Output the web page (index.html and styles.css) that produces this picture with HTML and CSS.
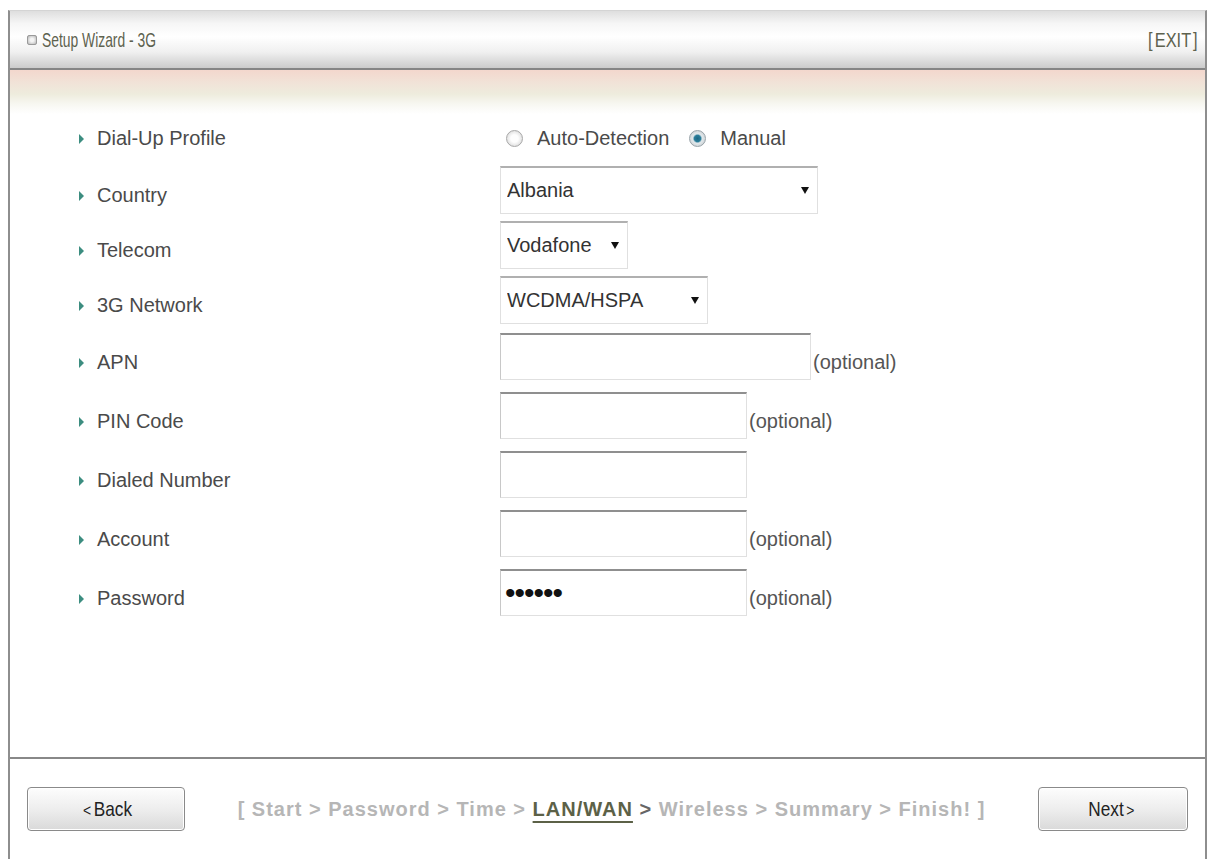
FILE: index.html
```html
<!DOCTYPE html>
<html lang="en">

<head>
    <meta charset="UTF-8">
    <meta name="viewport" content="width=device-width, initial-scale=1.0">
    <title>Setup Wizard - 3G</title>
    <link rel="stylesheet" href="styles.css">
</head>

<body>
    <div class="wizard">
        <div class="wizard-head">
            <h1 class="wizard-title"><span class="title-icon"></span><span class="narrow">Setup Wizard - 3G</span></h1>
            <a class="exit" href="#"><span class="narrow">[ EXIT ]</span></a>
        </div>

        <form class="wizard-body" action="#">
            <div class="row row-radio">
                <span class="field-name">Dial-Up Profile</span>
                <div class="field">
                    <label class="radio"><input type="radio" name="profile"> Auto-Detection</label>
                    <label class="radio"><input type="radio" name="profile" checked> Manual</label>
                </div>
            </div>
            <div class="row">
                <span class="field-name">Country</span>
                <div class="field">
                    <span class="select-wrap w-country">
                        <select name="country">
                            <option>Albania</option>
                        </select>
                    </span>
                </div>
            </div>
            <div class="row">
                <span class="field-name">Telecom</span>
                <div class="field">
                    <span class="select-wrap w-telecom">
                        <select name="telecom">
                            <option>Vodafone</option>
                        </select>
                    </span>
                </div>
            </div>
            <div class="row">
                <span class="field-name">3G Network</span>
                <div class="field">
                    <span class="select-wrap w-network">
                        <select name="network">
                            <option>WCDMA/HSPA</option>
                        </select>
                    </span>
                </div>
            </div>
            <div class="row row-text">
                <span class="field-name">APN</span>
                <div class="field">
                    <input class="text w-apn" type="text" name="apn">
                    <span class="hint">(optional)</span>
                </div>
            </div>
            <div class="row row-text">
                <span class="field-name">PIN Code</span>
                <div class="field">
                    <input class="text" type="text" name="pin">
                    <span class="hint">(optional)</span>
                </div>
            </div>
            <div class="row row-text">
                <span class="field-name">Dialed Number</span>
                <div class="field">
                    <input class="text" type="text" name="dial">
                </div>
            </div>
            <div class="row row-text">
                <span class="field-name">Account</span>
                <div class="field">
                    <input class="text" type="text" name="account">
                    <span class="hint">(optional)</span>
                </div>
            </div>
            <div class="row row-text">
                <span class="field-name">Password</span>
                <div class="field">
                    <input class="text pass" type="password" name="password" value="123456">
                    <span class="hint">(optional)</span>
                </div>
            </div>
        </form>

        <div class="wizard-foot">
            <button class="btn btn-back" type="button"><span class="narrow"><small>&lt;</small>Back</span></button>
            <p class="steps">[ Start &gt; Password &gt; Time &gt; <span class="current">LAN/WAN</span> <span class="next">&gt;</span> Wireless &gt; Summary &gt; Finish! ]</p>
            <button class="btn btn-next" type="button"><span class="narrow">Next<small>&gt;</small></span></button>
        </div>
    </div>
</body>

</html>
```

FILE: styles.css
```css
html,
body {
    margin: 0;
    height: 100%;
    overflow: hidden;
    background: #fff;
}

body {
    font-family: "Liberation Sans", Arial, sans-serif;
    color: #444;
}

/* squeezed lettering for the title bar and buttons */
.narrow {
    display: inline-block;
    transform: scaleX(.66);
    transform-origin: left center;
    white-space: nowrap;
}

.wizard {
    margin: 10px 8px 0 8px;
    height: calc(100vh - 10px);
    box-sizing: border-box;
    border-top: 1px solid #d4d4d4;
    border-left: 2px solid #8e8e8e;
    border-right: 2px solid #8e8e8e;
    display: flex;
    flex-direction: column;
}

/* title bar */
.wizard-head {
    height: 57px;
    flex: none;
    display: flex;
    align-items: center;
    justify-content: space-between;
    padding: 0 7px 0 17px;
    background: linear-gradient(#dedede 0, #f6f6f6 22%, #fff 45%, #f0f0f0 72%, #cbcbcb 100%);
    border-bottom: 2px solid #858585;
}

.wizard-title {
    margin: 0;
    display: flex;
    align-items: center;
    font-weight: normal;
    font-size: 21px;
    color: #5e624f;
}

.title-icon {
    width: 8px;
    height: 8px;
    margin-right: 5px;
    border: 1px solid #9a9a9a;
    border-radius: 2px;
    background: radial-gradient(#f4f4f4 30%, #b4b4b4 100%);
}

.exit {
    font-size: 21px;
    color: #5e624f;
    text-decoration: none;
}

.exit .narrow {
    transform: scaleX(.78);
    transform-origin: right center;
    word-spacing: -3px;
}

/* form rows */
.wizard-body {
    flex: 1;
    margin: 0;
    padding-top: 45px;
    background: linear-gradient(#f3d7cd 0, #f1e2d7 12px, #eeecdd 24px, #f7f7f1 34px, #fff 44px) no-repeat;
}

.row {
    display: grid;
    grid-template-columns: 490px 1fr;
    align-items: center;
    height: 55px;
}

.row-radio {
    height: 47px;
}

.row-text {
    height: 59px;
}

.field-name {
    padding-left: 69px;
    padding-top: 12px;
    font-size: 20px;
    color: #4a4a4a;
    display: flex;
    align-items: center;
}

.row-radio .field-name {
    padding-top: 0;
}

.field-name::before {
    content: "";
    width: 0;
    height: 0;
    margin-right: 13px;
    border-top: 5px solid transparent;
    border-bottom: 5px solid transparent;
    border-left: 5px solid #3c8d80;
}

.field {
    display: flex;
    align-items: center;
    font-size: 20px;
}

.radio {
    display: flex;
    align-items: center;
    margin-right: 14px;
    color: #4a4a4a;
}

.radio input {
    -webkit-appearance: none;
    appearance: none;
    box-sizing: border-box;
    width: 17px;
    height: 17px;
    margin: 0 14px 0 6px;
    border: 1px solid #a8a8a8;
    border-radius: 50%;
    background: radial-gradient(#fdfdfd 35%, #cdcdcd 100%);
}

.radio input:checked {
    background: radial-gradient(#1c6784 0, #2a7d99 30%, #e2e8eb 44%, #c2c7ca 100%);
    border-color: #97a2a8;
}

.select-wrap {
    position: relative;
    display: inline-block;
}

.select-wrap select {
    -webkit-appearance: none;
    appearance: none;
    width: 100%;
    height: 48px;
    padding: 0 6px;
    font-family: "Liberation Sans", Arial, sans-serif;
    font-size: 20px;
    color: #333;
    background: #fff;
    border: 1px solid #e0e0e0;
    border-top: 2px solid #b0b0b0;
    border-radius: 0;
}

/* drop-down arrow */
.select-wrap::after {
    content: "";
    position: absolute;
    right: 9px;
    top: 21px;
    border-left: 4px solid transparent;
    border-right: 4px solid transparent;
    border-top: 7px solid #111;
}

.w-country {
    width: 318px;
}

.w-telecom {
    width: 128px;
}

.w-network {
    width: 208px;
}

.text {
    width: 247px;
    height: 47px;
    box-sizing: border-box;
    margin: 0;
    padding: 0 4px;
    font-family: "Liberation Sans", Arial, sans-serif;
    font-size: 20px;
    color: #111;
    border: 1px solid #e0e0e0;
    border-top: 2px solid #8f8f8f;
    border-left-color: #c8c8c8;
}

.w-apn {
    width: 311px;
}

.pass {
    font-size: 30px;
    letter-spacing: -1px;
}

.hint {
    margin-left: 2px;
    padding-top: 12px;
    color: #555;
}

/* bottom bar */
.wizard-foot {
    height: 100px;
    flex: none;
    display: flex;
    align-items: center;
    justify-content: space-between;
    padding: 0 17px;
    border-top: 2px solid #888;
}

.btn {
    height: 44px;
    font-family: "Liberation Sans", Arial, sans-serif;
    font-size: 21px;
    color: #222;
    border: 1px solid #8a8a8a;
    border-radius: 4px;
    background: linear-gradient(#fdfdfd, #ececec 55%, #d9d9d9);
    box-shadow: inset 0 0 0 1px #fff;
}

.btn .narrow {
    transform: scaleX(.82);
    transform-origin: center;
}

.btn small {
    font-size: 17px;
    margin: 0 3px;
}

.btn-back {
    width: 158px;
}

.btn-next {
    width: 150px;
}

.steps {
    margin: 0;
    font-weight: bold;
    font-size: 20px;
    letter-spacing: 1px;
    color: #b6b6b6;
}

.steps .current {
    color: #5c6147;
    text-decoration: underline;
    text-decoration-thickness: 2px;
    text-underline-offset: 5px;
}

.steps .next {
    color: #666;
}
```
